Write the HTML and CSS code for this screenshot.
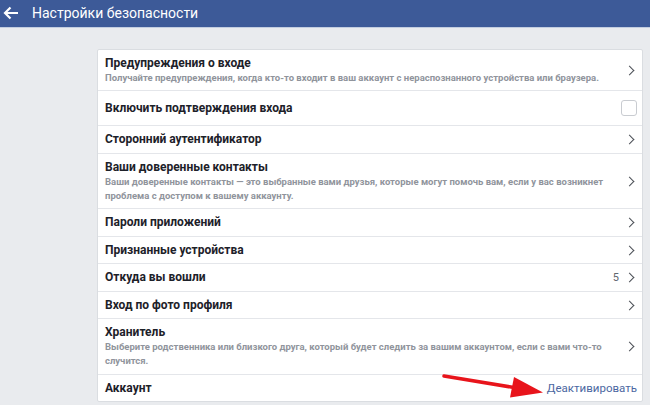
FILE: index.html
```html
<!DOCTYPE html>
<html lang="ru">
<head>
<meta charset="utf-8">
<link rel="stylesheet" href="styles.css">
</head>
<body>
<header class="topbar">
  <svg class="back" width="16" height="14" viewBox="0 0 16 14"><path d="M15 7H2.5M7.5 1.5L2 7l5.5 5.5" fill="none" stroke="#fff" stroke-width="2.2"/></svg>
  <span class="title">Настройки безопасности</span>
</header>
<main class="page">
  <section class="card">
    <div class="row">
      <div class="text"><div class="t">Предупреждения о входе</div><div class="s">Получайте предупреждения, когда кто-то входит в ваш аккаунт с нераспознанного устройства или браузера.</div></div>
      <span class="chev"></span>
    </div>
    <div class="row row-check">
      <div class="text"><div class="t">Включить подтверждения входа</div></div>
      <span class="check"></span>
    </div>
    <div class="row">
      <div class="text"><div class="t">Сторонний аутентификатор</div></div>
      <span class="chev"></span>
    </div>
    <div class="row">
      <div class="text"><div class="t">Ваши доверенные контакты</div><div class="s">Ваши доверенные контакты — это выбранные вами друзья, которые могут помочь вам, если у вас возникнет проблема с доступом к вашему аккаунту.</div></div>
      <span class="chev"></span>
    </div>
    <div class="row">
      <div class="text"><div class="t">Пароли приложений</div></div>
      <span class="chev"></span>
    </div>
    <div class="row">
      <div class="text"><div class="t">Признанные устройства</div></div>
      <span class="chev"></span>
    </div>
    <div class="row">
      <div class="text"><div class="t">Откуда вы вошли</div></div>
      <span class="count">5</span><span class="chev"></span>
    </div>
    <div class="row">
      <div class="text"><div class="t">Вход по фото профиля</div></div>
      <span class="chev"></span>
    </div>
    <div class="row">
      <div class="text"><div class="t">Хранитель</div><div class="s">Выберите родственника или близкого друга, который будет следить за вашим аккаунтом, если с вами что-то случится.</div></div>
      <span class="chev"></span>
    </div>
    <div class="row row-last">
      <div class="text"><div class="t">Аккаунт</div></div>
      <span class="link">Деактивировать</span>
    </div>
  </section>
  <svg class="arrow" width="110" height="26" viewBox="0 0 110 26"><path d="M2 2L78 14.5" stroke="#e8141b" stroke-width="3.5" stroke-linecap="round"/><path d="M72 3L101 18.5L68 23.5Z" fill="#e8141b"/></svg>
</main>
</body>
</html>
```
FILE: styles.css
```css
* { box-sizing: border-box; }
html, body { margin: 0; padding: 0; }
body {
  width: 650px;
  height: 405px;
  overflow: hidden;
  background: #e9ebee;
  font-family: Roboto, "Liberation Sans", sans-serif;
  color: #1d2129;
}
.topbar {
  height: 28px;
  background: #3d5a98;
  border-bottom: 1px solid #c3cde0;
  display: flex;
  align-items: center;
  padding-left: 3px;
}
.back { margin-right: 13px; margin-top: -1px; }
.title { color: #fff; font-size: 14px; margin-top: -1px; }
.page { position: relative; padding: 21px 0 0 97px; }
.card {
  width: 546px;
  background: #fff;
  border: 1px solid #dadde1;
  border-radius: 2px;
}
.row {
  display: flex;
  align-items: center;
  padding: 6px 8px 5.5px 7px;
  border-bottom: 1px solid #e4e6ea;
}
.row:first-child { padding-bottom: 4.5px; }
.row-last { border-bottom: none; }
.row-check { padding-top: 9.5px; padding-bottom: 9px; }
.text { flex: 1; min-width: 0; }
.t { font-size: 12px; font-weight: 700; line-height: 15px; color: #1d2129; }
.s { font-size: 9.5px; font-weight: 700; line-height: 14px; color: #90949c; padding-right: 14px; }
.chev {
  width: 7px; height: 7px;
  border-right: 1.6px solid #4b4f56;
  border-top: 1.6px solid #4b4f56;
  transform: rotate(45deg);
  margin-right: 1px;
  flex: none;
}
.count { font-size: 11px; color: #606770; margin-right: 7px; }
.check {
  width: 16px; height: 16px;
  border: 1px solid #c9ccd1;
  border-radius: 3px;
  flex: none;
  margin-right: -3px;
}
.link { font-size: 11.5px; color: #4b67a1; margin-right: -3px; }
.arrow { position: absolute; left: 442px; top: 346px; }
```
